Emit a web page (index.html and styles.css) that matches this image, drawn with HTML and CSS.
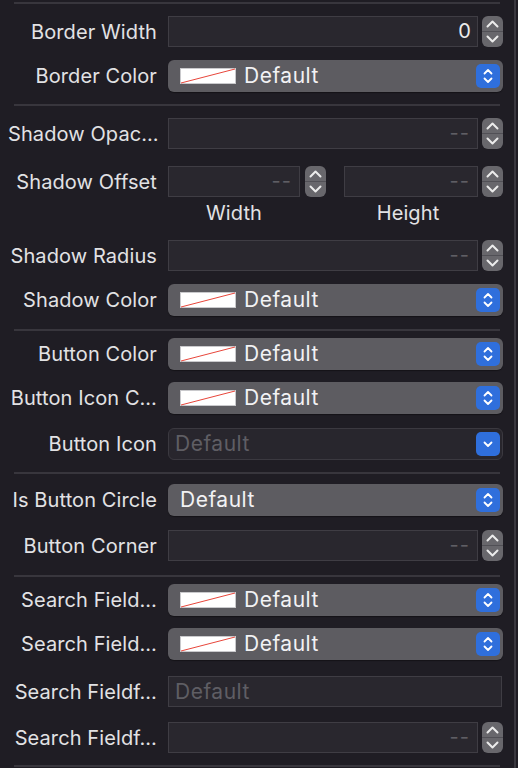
FILE: index.html
```html
<!DOCTYPE html>
<html>
<head>
<meta charset="utf-8">
<link rel="stylesheet" href="styles.css">
</head>
<body>
<div class="panel">
  <div class="sep"></div>

  <div class="row mt12">
    <div class="lbl">Border Width</div>
    <div class="ctl">
      <div class="field num">0</div>
      <svg class="stepper" viewBox="0 0 21 31"><rect x="0" y="0" width="21" height="31" rx="6" fill="#68676c"/><line x1="0" y1="15.5" x2="21" y2="15.5" stroke="#515056" stroke-width="1"/><path d="M5.5 10.5 L10.5 5.5 L15.5 10.5" fill="none" stroke="#ececec" stroke-width="2" stroke-linecap="round" stroke-linejoin="round"/><path d="M5.5 20.5 L10.5 25.5 L15.5 20.5" fill="none" stroke="#ececec" stroke-width="2" stroke-linecap="round" stroke-linejoin="round"/></svg>
    </div>
  </div>

  <div class="row mt13">
    <div class="lbl">Border Color</div>
    <div class="popup">
      <svg class="swatch" viewBox="0 0 56 16"><rect x="0.5" y="0.5" width="55" height="15" fill="#ffffff" stroke="#c9c9cc"/><line x1="1" y1="15" x2="55" y2="1" stroke="#e8463b" stroke-width="1"/></svg>
      <span class="ptext">Default</span>
      <svg class="blue" viewBox="0 0 24 24"><rect width="24" height="24" rx="5" fill="#2f6fdc"/><path d="M8.5 9.5 L12 6 L15.5 9.5" fill="none" stroke="#fff" stroke-width="1.8" stroke-linecap="round" stroke-linejoin="round"/><path d="M8.5 14.5 L12 18 L15.5 14.5" fill="none" stroke="#fff" stroke-width="1.8" stroke-linecap="round" stroke-linejoin="round"/></svg>
    </div>
  </div>

  <div class="sep mt12"></div>

  <div class="row mt12">
    <div class="lbl">Shadow Opac…</div>
    <div class="ctl">
      <div class="field num ph">--</div>
      <svg class="stepper" viewBox="0 0 21 31"><rect x="0" y="0" width="21" height="31" rx="6" fill="#68676c"/><line x1="0" y1="15.5" x2="21" y2="15.5" stroke="#515056" stroke-width="1"/><path d="M5.5 10.5 L10.5 5.5 L15.5 10.5" fill="none" stroke="#ececec" stroke-width="2" stroke-linecap="round" stroke-linejoin="round"/><path d="M5.5 20.5 L10.5 25.5 L15.5 20.5" fill="none" stroke="#ececec" stroke-width="2" stroke-linecap="round" stroke-linejoin="round"/></svg>
    </div>
  </div>

  <div class="row mt17">
    <div class="lbl">Shadow Offset</div>
    <div class="ctl pair">
      <div class="half first">
        <div class="field num ph">--</div>
        <svg class="stepper" viewBox="0 0 21 31"><rect x="0" y="0" width="21" height="31" rx="6" fill="#68676c"/><line x1="0" y1="15.5" x2="21" y2="15.5" stroke="#515056" stroke-width="1"/><path d="M5.5 10.5 L10.5 5.5 L15.5 10.5" fill="none" stroke="#ececec" stroke-width="2" stroke-linecap="round" stroke-linejoin="round"/><path d="M5.5 20.5 L10.5 25.5 L15.5 20.5" fill="none" stroke="#ececec" stroke-width="2" stroke-linecap="round" stroke-linejoin="round"/></svg>
      </div>
      <div class="half second">
        <div class="field num ph">--</div>
        <svg class="stepper" viewBox="0 0 21 31"><rect x="0" y="0" width="21" height="31" rx="6" fill="#68676c"/><line x1="0" y1="15.5" x2="21" y2="15.5" stroke="#515056" stroke-width="1"/><path d="M5.5 10.5 L10.5 5.5 L15.5 10.5" fill="none" stroke="#ececec" stroke-width="2" stroke-linecap="round" stroke-linejoin="round"/><path d="M5.5 20.5 L10.5 25.5 L15.5 20.5" fill="none" stroke="#ececec" stroke-width="2" stroke-linecap="round" stroke-linejoin="round"/></svg>
      </div>
    </div>
  </div>

  <div class="row sub mt6">
    <div></div>
    <div class="subs">
      <span class="sublbl w1">Width</span>
      <span class="sublbl w2">Height</span>
    </div>
  </div>

  <div class="row mt17">
    <div class="lbl">Shadow Radius</div>
    <div class="ctl">
      <div class="field num ph">--</div>
      <svg class="stepper" viewBox="0 0 21 31"><rect x="0" y="0" width="21" height="31" rx="6" fill="#68676c"/><line x1="0" y1="15.5" x2="21" y2="15.5" stroke="#515056" stroke-width="1"/><path d="M5.5 10.5 L10.5 5.5 L15.5 10.5" fill="none" stroke="#ececec" stroke-width="2" stroke-linecap="round" stroke-linejoin="round"/><path d="M5.5 20.5 L10.5 25.5 L15.5 20.5" fill="none" stroke="#ececec" stroke-width="2" stroke-linecap="round" stroke-linejoin="round"/></svg>
    </div>
  </div>

  <div class="row mt13">
    <div class="lbl">Shadow Color</div>
    <div class="popup">
      <svg class="swatch" viewBox="0 0 56 16"><rect x="0.5" y="0.5" width="55" height="15" fill="#ffffff" stroke="#c9c9cc"/><line x1="1" y1="15" x2="55" y2="1" stroke="#e8463b" stroke-width="1"/></svg>
      <span class="ptext">Default</span>
      <svg class="blue" viewBox="0 0 24 24"><rect width="24" height="24" rx="5" fill="#2f6fdc"/><path d="M8.5 9.5 L12 6 L15.5 9.5" fill="none" stroke="#fff" stroke-width="1.8" stroke-linecap="round" stroke-linejoin="round"/><path d="M8.5 14.5 L12 18 L15.5 14.5" fill="none" stroke="#fff" stroke-width="1.8" stroke-linecap="round" stroke-linejoin="round"/></svg>
    </div>
  </div>

  <div class="sep mt13"></div>

  <div class="row mt7">
    <div class="lbl">Button Color</div>
    <div class="popup">
      <svg class="swatch" viewBox="0 0 56 16"><rect x="0.5" y="0.5" width="55" height="15" fill="#ffffff" stroke="#c9c9cc"/><line x1="1" y1="15" x2="55" y2="1" stroke="#e8463b" stroke-width="1"/></svg>
      <span class="ptext">Default</span>
      <svg class="blue" viewBox="0 0 24 24"><rect width="24" height="24" rx="5" fill="#2f6fdc"/><path d="M8.5 9.5 L12 6 L15.5 9.5" fill="none" stroke="#fff" stroke-width="1.8" stroke-linecap="round" stroke-linejoin="round"/><path d="M8.5 14.5 L12 18 L15.5 14.5" fill="none" stroke="#fff" stroke-width="1.8" stroke-linecap="round" stroke-linejoin="round"/></svg>
    </div>
  </div>

  <div class="row mt12">
    <div class="lbl">Button Icon C…</div>
    <div class="popup">
      <svg class="swatch" viewBox="0 0 56 16"><rect x="0.5" y="0.5" width="55" height="15" fill="#ffffff" stroke="#c9c9cc"/><line x1="1" y1="15" x2="55" y2="1" stroke="#e8463b" stroke-width="1"/></svg>
      <span class="ptext">Default</span>
      <svg class="blue" viewBox="0 0 24 24"><rect width="24" height="24" rx="5" fill="#2f6fdc"/><path d="M8.5 9.5 L12 6 L15.5 9.5" fill="none" stroke="#fff" stroke-width="1.8" stroke-linecap="round" stroke-linejoin="round"/><path d="M8.5 14.5 L12 18 L15.5 14.5" fill="none" stroke="#fff" stroke-width="1.8" stroke-linecap="round" stroke-linejoin="round"/></svg>
    </div>
  </div>

  <div class="row mt14">
    <div class="lbl">Button Icon</div>
    <div class="combo">
      <span class="ctext">Default</span>
      <svg class="blue" viewBox="0 0 24 24"><rect width="24" height="24" rx="5" fill="#2f6fdc"/><path d="M8.5 10.5 L12 14 L15.5 10.5" fill="none" stroke="#fff" stroke-width="1.8" stroke-linecap="round" stroke-linejoin="round"/></svg>
    </div>
  </div>

  <div class="sep mt12"></div>

  <div class="row mt10">
    <div class="lbl">Is Button Circle</div>
    <div class="popup">
      <span class="ptext">Default</span>
      <svg class="blue" viewBox="0 0 24 24"><rect width="24" height="24" rx="5" fill="#2f6fdc"/><path d="M8.5 9.5 L12 6 L15.5 9.5" fill="none" stroke="#fff" stroke-width="1.8" stroke-linecap="round" stroke-linejoin="round"/><path d="M8.5 14.5 L12 18 L15.5 14.5" fill="none" stroke="#fff" stroke-width="1.8" stroke-linecap="round" stroke-linejoin="round"/></svg>
    </div>
  </div>

  <div class="row mt14">
    <div class="lbl">Button Corner</div>
    <div class="ctl">
      <div class="field num ph">--</div>
      <svg class="stepper" viewBox="0 0 21 31"><rect x="0" y="0" width="21" height="31" rx="6" fill="#68676c"/><line x1="0" y1="15.5" x2="21" y2="15.5" stroke="#515056" stroke-width="1"/><path d="M5.5 10.5 L10.5 5.5 L15.5 10.5" fill="none" stroke="#ececec" stroke-width="2" stroke-linecap="round" stroke-linejoin="round"/><path d="M5.5 20.5 L10.5 25.5 L15.5 20.5" fill="none" stroke="#ececec" stroke-width="2" stroke-linecap="round" stroke-linejoin="round"/></svg>
    </div>
  </div>

  <div class="sep mt14"></div>

  <div class="row mt7">
    <div class="lbl">Search Field…</div>
    <div class="popup">
      <svg class="swatch" viewBox="0 0 56 16"><rect x="0.5" y="0.5" width="55" height="15" fill="#ffffff" stroke="#c9c9cc"/><line x1="1" y1="15" x2="55" y2="1" stroke="#e8463b" stroke-width="1"/></svg>
      <span class="ptext">Default</span>
      <svg class="blue" viewBox="0 0 24 24"><rect width="24" height="24" rx="5" fill="#2f6fdc"/><path d="M8.5 9.5 L12 6 L15.5 9.5" fill="none" stroke="#fff" stroke-width="1.8" stroke-linecap="round" stroke-linejoin="round"/><path d="M8.5 14.5 L12 18 L15.5 14.5" fill="none" stroke="#fff" stroke-width="1.8" stroke-linecap="round" stroke-linejoin="round"/></svg>
    </div>
  </div>

  <div class="row mt12">
    <div class="lbl">Search Field…</div>
    <div class="popup">
      <svg class="swatch" viewBox="0 0 56 16"><rect x="0.5" y="0.5" width="55" height="15" fill="#ffffff" stroke="#c9c9cc"/><line x1="1" y1="15" x2="55" y2="1" stroke="#e8463b" stroke-width="1"/></svg>
      <span class="ptext">Default</span>
      <svg class="blue" viewBox="0 0 24 24"><rect width="24" height="24" rx="5" fill="#2f6fdc"/><path d="M8.5 9.5 L12 6 L15.5 9.5" fill="none" stroke="#fff" stroke-width="1.8" stroke-linecap="round" stroke-linejoin="round"/><path d="M8.5 14.5 L12 18 L15.5 14.5" fill="none" stroke="#fff" stroke-width="1.8" stroke-linecap="round" stroke-linejoin="round"/></svg>
    </div>
  </div>

  <div class="row mt16">
    <div class="lbl">Search Fieldf…</div>
    <div class="field wide ph">Default</div>
  </div>

  <div class="row mt15">
    <div class="lbl">Search Fieldf…</div>
    <div class="ctl">
      <div class="field num ph">--</div>
      <svg class="stepper" viewBox="0 0 21 31"><rect x="0" y="0" width="21" height="31" rx="6" fill="#68676c"/><line x1="0" y1="15.5" x2="21" y2="15.5" stroke="#515056" stroke-width="1"/><path d="M5.5 10.5 L10.5 5.5 L15.5 10.5" fill="none" stroke="#ececec" stroke-width="2" stroke-linecap="round" stroke-linejoin="round"/><path d="M5.5 20.5 L10.5 25.5 L15.5 20.5" fill="none" stroke="#ececec" stroke-width="2" stroke-linecap="round" stroke-linejoin="round"/></svg>
    </div>
  </div>

  <div class="sep mt12"></div>
</div>
</body>
</html>
```

FILE: styles.css
```css
html, body {
  margin: 0;
  padding: 0;
  background: #1f1d24;
}

body {
  font-family: Inter, "Noto Sans", sans-serif;
  font-size: 20px;
  letter-spacing: 0.1px;
  color: #e2e2e4;
}

.panel {
  width: 516px;
  height: 768px;
  padding-top: 2px;
  box-sizing: border-box;
  border-right: 2px solid #3a383f;
  overflow: hidden;
}

.sep {
  height: 2px;
  margin-left: 14px;
  margin-right: 14px;
  background: #38363d;
}

.row {
  display: grid;
  grid-template-columns: 149px 335px;
  column-gap: 11px;
  padding-left: 8px;
  align-items: center;
}

.lbl {
  text-align: right;
  white-space: nowrap;
  line-height: 24px;
  color: #e2e2e4;
}

.ctl {
  display: flex;
  align-items: center;
  gap: 4px;
}

.field {
  height: 31px;
  box-sizing: border-box;
  background: #29272e;
  border: 1px solid #3f3d44;
  line-height: 29px;
  color: #ececec;
}

.ctl .field {
  flex: 1;
}

.num {
  text-align: right;
  padding-right: 6px;
}

.ph {
  color: #5f5e64;
}

.num.ph {
  letter-spacing: 1px;
  padding-right: 7px;
}

.wide {
  width: 334px;
  padding-left: 6px;
  font-size: 21px;
  letter-spacing: 0.5px;
}

.stepper {
  width: 21px;
  height: 31px;
  flex: none;
  display: block;
}

.pair {
  gap: 18px;
}

.half {
  display: flex;
  align-items: center;
}

.half.first {
  width: 158px;
  gap: 5px;
}

.half.second {
  flex: 1;
  gap: 4px;
}

.half .field {
  flex: 1;
}

.subs {
  display: flex;
  gap: 41px;
}

.sublbl {
  display: block;
  text-align: center;
  line-height: 20px;
  color: #e2e2e4;
}

.w1 {
  width: 132px;
}

.w2 {
  width: 134px;
}

.popup {
  height: 32px;
  box-sizing: border-box;
  border-radius: 6px;
  background: #5d5c61;
  box-shadow: 0 1px 1px rgba(0, 0, 0, 0.35);
  display: flex;
  align-items: center;
  padding: 0 3px 0 12px;
}

.swatch {
  width: 56px;
  height: 16px;
  flex: none;
  margin-right: 8px;
  display: block;
}

.ptext {
  flex: 1;
  color: #f2f2f4;
  font-size: 21px;
  letter-spacing: 0.5px;
  line-height: 24px;
}

.blue {
  width: 24px;
  height: 24px;
  flex: none;
  display: block;
}

.combo {
  height: 32px;
  box-sizing: border-box;
  border-radius: 6px;
  background: #28262d;
  border: 1px solid #3b3940;
  display: flex;
  align-items: center;
  padding: 0 2px 0 6px;
}

.ctext {
  flex: 1;
  color: #5f5e64;
  font-size: 21px;
  letter-spacing: 0.5px;
  line-height: 24px;
}

.mt6 { margin-top: 6px; }
.mt7 { margin-top: 7px; }
.mt10 { margin-top: 10px; }
.mt12 { margin-top: 12px; }
.mt13 { margin-top: 13px; }
.mt14 { margin-top: 14px; }
.mt15 { margin-top: 15px; }
.mt16 { margin-top: 16px; }
.mt17 { margin-top: 17px; }
```
